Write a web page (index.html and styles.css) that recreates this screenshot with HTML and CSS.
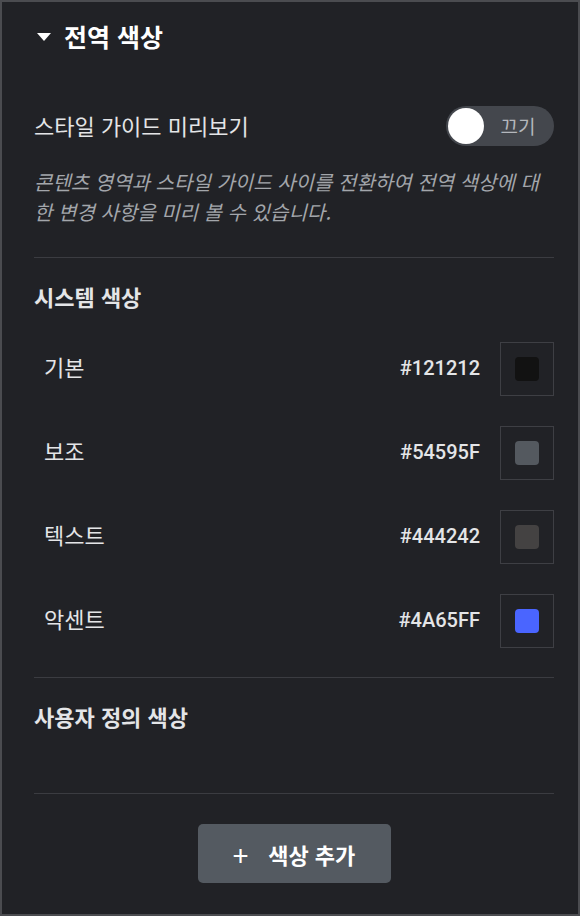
FILE: index.html
```html
<!DOCTYPE html>
<html lang="ko">
<head>
    <meta charset="UTF-8">
    <meta name="viewport" content="width=device-width, initial-scale=1.0">
    <title>전역 색상</title>
    <link rel="stylesheet" href="styles.css">
</head>
<body>
    <div id="panel">
        <div class="panel-title">
            <span class="caret"></span>
            <span>전역 색상</span>
        </div>

        <div class="preview-row">
            <span class="preview-label">스타일 가이드 미리보기</span>
            <div class="toggle">
                <span class="knob"></span>
                <span class="toggle-text">끄기</span>
            </div>
        </div>
        <p class="hint">콘텐츠 영역과 스타일 가이드 사이를 전환하여 전역 색상에 대한 변경 사항을 미리 볼 수 있습니다.</p>

        <div class="divider"></div>

        <div class="section-title">시스템 색상</div>
        <div id="colorList">
            <div class="color-row">
                <span class="color-name">기본</span>
                <span class="color-hex">#121212</span>
                <div class="swatch-box"><span class="swatch" style="background-color: #121212"></span></div>
            </div>
            <div class="color-row">
                <span class="color-name">보조</span>
                <span class="color-hex">#54595F</span>
                <div class="swatch-box"><span class="swatch" style="background-color: #54595F"></span></div>
            </div>
            <div class="color-row">
                <span class="color-name">텍스트</span>
                <span class="color-hex">#444242</span>
                <div class="swatch-box"><span class="swatch" style="background-color: #444242"></span></div>
            </div>
            <div class="color-row">
                <span class="color-name">악센트</span>
                <span class="color-hex">#4A65FF</span>
                <div class="swatch-box"><span class="swatch" style="background-color: #4A65FF"></span></div>
            </div>
        </div>

        <div class="divider"></div>

        <div class="section-title custom">사용자 정의 색상</div>

        <div class="divider"></div>

        <div class="add-wrap">
            <button class="add-btn"><span class="plus">+</span>색상 추가</button>
        </div>
    </div>
</body>
</html>
```

FILE: styles.css
```css
body {
    margin: 0;
    background-color: #4b4c50;
    font-family: "Noto Sans CJK KR", "Noto Sans", sans-serif;
    color: #e6e7e9;
}
#panel {
    width: 580px;
    height: 916px;
    box-sizing: border-box;
    border: 2px solid #4b4c50;
    background-color: #212226;
    padding: 17px 24px 0 32px;
}
.panel-title {
    display: flex;
    align-items: center;
    font-size: 25px;
    font-weight: 700;
    line-height: 34px;
    color: #ffffff;
}
.caret {
    width: 0;
    height: 0;
    border-left: 7px solid transparent;
    border-right: 7px solid transparent;
    border-top: 8px solid #ffffff;
    margin: 2px 13px 0 3px;
}
.preview-row {
    display: flex;
    justify-content: space-between;
    align-items: center;
    margin-top: 53px;
    height: 40px;
}
.preview-label {
    font-size: 22px;
    color: #e4e5e7;
    margin-bottom: 2px;
}
.toggle {
    width: 108px;
    height: 40px;
    box-sizing: border-box;
    border-radius: 20px;
    background-color: #44474d;
    display: flex;
    align-items: center;
    padding: 0 2px;
}
.knob {
    width: 36px;
    height: 36px;
    border-radius: 50%;
    background-color: #ffffff;
}
.toggle-text {
    flex: 1;
    text-align: center;
    font-size: 19px;
    color: #b4b7bc;
    margin-bottom: 2px;
}
.hint {
    margin: 21px 0 0;
    font-size: 20px;
    line-height: 30px;
    font-style: italic;
    color: #a3a6ab;
}
.divider {
    height: 1px;
    background-color: #3b3c41;
    margin-top: 30px;
}
.section-title {
    margin-top: 23px;
    font-size: 22px;
    font-weight: 700;
    line-height: 30px;
    color: #e4e5e7;
}
.section-title.custom + .divider {
    margin-top: 62px;
}
#colorList {
    margin-top: 31px;
    display: flex;
    flex-direction: column;
    gap: 30px;
}
.color-row {
    display: flex;
    align-items: center;
    height: 54px;
}
.color-name {
    flex: 1;
    padding-left: 10px;
    font-size: 22px;
    color: #e4e5e7;
    margin-bottom: 6px;
}
.color-hex {
    font-family: Roboto, "Noto Sans", sans-serif;
    font-size: 20px;
    font-weight: 500;
    color: #e4e5e7;
    margin-right: 20px;
    margin-bottom: 2px;
}
.swatch-box {
    width: 54px;
    height: 54px;
    box-sizing: border-box;
    border: 1px solid #3e3f44;
    display: flex;
    align-items: center;
    justify-content: center;
}
.swatch {
    width: 24px;
    height: 24px;
    border-radius: 4px;
}
#colorList + .divider {
    margin-top: 29px;
}
.add-wrap {
    display: flex;
    justify-content: center;
    margin-top: 30px;
}
.add-btn {
    width: 193px;
    height: 59px;
    border: none;
    border-radius: 5px;
    background-color: #545a61;
    color: #ffffff;
    font-family: "Noto Sans CJK KR", "Noto Sans", sans-serif;
    font-size: 22px;
    font-weight: 700;
    display: flex;
    align-items: center;
    justify-content: center;
    cursor: pointer;
}
.plus {
    font-size: 28px;
    font-weight: 400;
    margin-right: 20px;
    line-height: 1;
}
```
